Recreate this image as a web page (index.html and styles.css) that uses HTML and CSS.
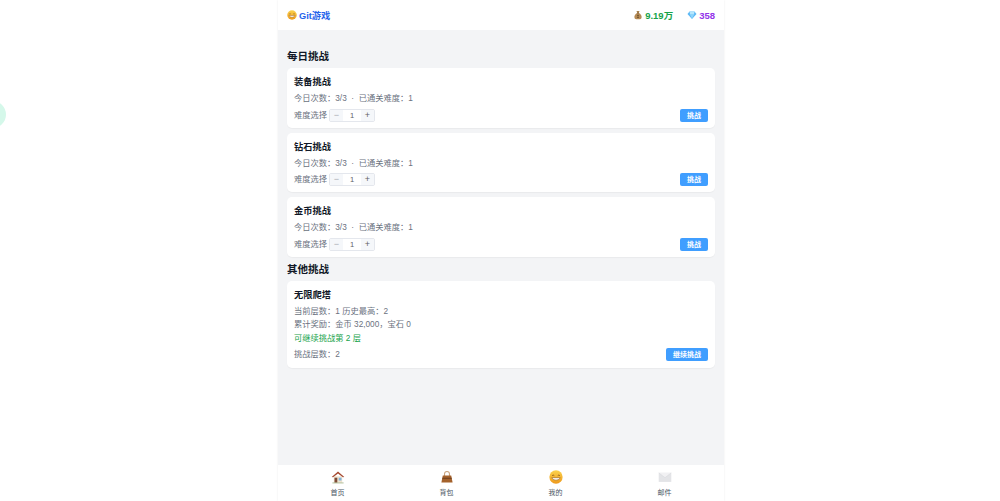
FILE: index.html
```html
<!DOCTYPE html>
<html lang="zh-CN">
<head>
    <meta charset="UTF-8">
    <meta name="viewport" content="width=device-width, initial-scale=1.0">
    <title>Git游戏</title>
    <link rel="stylesheet" href="styles.css">
</head>
<body>
    <div class="float-dot"></div>

    <div class="app">
        <header class="topbar">
            <div class="logo">
                <svg class="icon" viewBox="0 0 20 20"><use href="#smile"/></svg>
                <span>Git游戏</span>
            </div>
            <div class="assets">
                <div class="asset gold">
                    <svg class="icon" viewBox="0 0 20 20"><use href="#moneybag"/></svg>
                    <span>9.19万</span>
                </div>
                <div class="asset gem">
                    <svg class="icon" viewBox="0 0 20 20">
                        <path d="M5 3h10l4 5-9 10L1 8z" fill="#5cb8f5"/>
                        <path d="M5.500 8h9L10 18z" fill="#8ed4fb"/>
                        <path d="M5 3h10l-1 5H6z" fill="#b5e6fd"/>
                    </svg>
                    <span>358</span>
                </div>
            </div>
        </header>

        <main>
            <h2 class="section-title">每日挑战</h2>

            <div class="card">
                <h3>装备挑战</h3>
                <p class="info">今日次数：3/3 &nbsp;·&nbsp; 已通关难度：1</p>
                <div class="action-row">
                    <div class="level">
                        <span class="info">难度选择</span>
                        <div class="stepper"><span class="minus">−</span><span class="num">1</span><span class="plus">+</span></div>
                    </div>
                    <a href="#" class="btn">挑战</a>
                </div>
            </div>

            <div class="card">
                <h3>钻石挑战</h3>
                <p class="info">今日次数：3/3 &nbsp;·&nbsp; 已通关难度：1</p>
                <div class="action-row">
                    <div class="level">
                        <span class="info">难度选择</span>
                        <div class="stepper"><span class="minus">−</span><span class="num">1</span><span class="plus">+</span></div>
                    </div>
                    <a href="#" class="btn">挑战</a>
                </div>
            </div>

            <div class="card">
                <h3>金币挑战</h3>
                <p class="info">今日次数：3/3 &nbsp;·&nbsp; 已通关难度：1</p>
                <div class="action-row">
                    <div class="level">
                        <span class="info">难度选择</span>
                        <div class="stepper"><span class="minus">−</span><span class="num">1</span><span class="plus">+</span></div>
                    </div>
                    <a href="#" class="btn">挑战</a>
                </div>
            </div>

            <h2 class="section-title">其他挑战</h2>

            <div class="card tower">
                <h3>无限爬塔</h3>
                <p class="info">当前层数：1 历史最高：2</p>
                <p class="info">累计奖励：金币 32,000，宝石 0</p>
                <p class="info ok">可继续挑战第 2 层</p>
                <div class="action-row">
                    <span class="info">挑战层数：2</span>
                    <a href="#" class="btn">继续挑战</a>
                </div>
            </div>
        </main>

        <nav class="tabbar">
            <a href="#" class="tab">
                <svg class="tab-icon" viewBox="0 0 20 20">
                    <path d="M4 9h12v9H4z" fill="#f0e3cf"/>
                    <path d="M1 10l9-8 9 8-2 .5L10 5 3 10.500z" fill="#a5482f"/>
                    <path d="M5 11h4v7H5z" fill="#7d4a36"/>
                    <path d="M11 11h4v4h-4z" fill="#7fb4dc"/>
                    <path d="M2 18h16v1H2z" fill="#8fa36f"/>
                </svg>
                <span>首页</span>
            </a>
            <a href="#" class="tab">
                <svg class="tab-icon" viewBox="0 0 20 20">
                    <path d="M6.500 9V5.500a3.500 3.500 0 0 1 7 0V9" fill="none" stroke="#c9a27c" stroke-width="1.500"/>
                    <path d="M4 8h12l2 10H2z" fill="#a4622c"/>
                    <path d="M3.400 11h13.200l.3 1.500H3.100z" fill="#6d3d1a"/>
                </svg>
                <span>背包</span>
            </a>
            <a href="#" class="tab">
                <svg class="tab-icon" viewBox="0 0 20 20"><use href="#smile"/></svg>
                <span>我的</span>
            </a>
            <a href="#" class="tab">
                <svg class="tab-icon" viewBox="0 0 20 20">
                    <path d="M1 4h18v13H1z" fill="#e3e4e7"/>
                    <path d="M1 4l9 7 9-7" fill="#f1f1f3" stroke="#cfd1d6" stroke-width=".6"/>
                </svg>
                <span>邮件</span>
            </a>
        </nav>
    </div>

    <svg class="defs" width="0" height="0">
        <defs>
            <linearGradient id="face" x1="0" y1="0" x2="0" y2="1">
                <stop offset="0" stop-color="#fbd24e"/>
                <stop offset="1" stop-color="#ee9a1c"/>
            </linearGradient>
            <g id="smile">
                <circle cx="10" cy="10" r="9.500" fill="url(#face)"/>
                <path d="M4.500 8q1.500-1.500 3 0M12.500 8q1.500-1.500 3 0" fill="none" stroke="#7a4a12" stroke-width="1.100"/>
                <path d="M4 11h12q-1 3.500-6 3.500T4 11z" fill="#fff" stroke="#8a5414" stroke-width=".8"/>
            </g>
            <g id="moneybag">
                <path d="M7 2h6l-1.500 4h-3z" fill="#a9824f"/>
                <path d="M8 6h4c4 2 6 6 5 10-.5 2-2 2.500-7 2.500S3.500 18 3 16C2 12 4 8 8 6z" fill="#b58a55"/>
                <path d="M8 5.500h4v1.200H8z" fill="#6f5230"/>
                <path d="M8 10h4v1H8zM8 14h4v1H8zM9.500 9h1v7h-1z" fill="#5a4022"/>
            </g>
        </defs>
    </svg>
</body>
</html>
```

FILE: styles.css
```css
* {
    box-sizing: border-box;
}
html, body {
    height: 100%;
}
body {
    margin: 0;
    padding: 0 0 0 2px;
    background-color: #fff;
    color: #111827;
    font-family: "Liberation Sans", "Noto Sans CJK SC", sans-serif;
    overflow: hidden;
}
.defs {
    position: absolute;
}
.float-dot {
    position: absolute;
    left: -21px;
    top: 101px;
    width: 27px;
    height: 27px;
    border-radius: 50%;
    background-color: #d5f8ea;
}
.app {
    width: 446px;
    height: 100%;
    margin: 0 auto;
    display: flex;
    flex-direction: column;
    background-color: #f3f4f6;
    box-shadow: 0 0 2px rgba(0, 0, 0, 0.08);
}
.topbar {
    height: 30px;
    padding: 0 9px;
    flex-shrink: 0;
    display: flex;
    justify-content: space-between;
    align-items: center;
    background-color: #fff;
}
.icon {
    width: 10px;
    height: 10px;
}
.logo {
    display: flex;
    align-items: center;
    gap: 2px;
    color: #2563eb;
    font-size: 9.250px;
    font-weight: bold;
}
.assets {
    display: flex;
    gap: 14px;
}
.asset {
    display: flex;
    align-items: center;
    gap: 2px;
    font-size: 9.500px;
    font-weight: bold;
}
.gold {
    color: #16a34a;
}
.gem {
    color: #9333ea;
}
main {
    flex: 1;
    padding: 19px 9px 0;
}
.section-title {
    margin: 0 0 5px;
    font-size: 10.500px;
    line-height: 14px;
    font-weight: bold;
}
.card {
    display: flex;
    flex-direction: column;
    height: 59.500px;
    margin-bottom: 5px;
    padding: 7px 7px 0;
    background-color: #fff;
    border-radius: 5px;
    box-shadow: 0 1px 1px rgba(0, 0, 0, 0.04);
}
.card.tower {
    height: 87px;
}
.card h3 {
    margin: 0 0 3px;
    font-size: 9.250px;
    line-height: 14px;
    font-weight: bold;
}
.info {
    margin: 0;
    color: #6b7280;
    font-size: 8.250px;
    line-height: 13.500px;
}
.info.ok {
    color: #16a34a;
}
.action-row {
    display: flex;
    justify-content: space-between;
    align-items: center;
    margin-top: 3px;
}
.level {
    display: flex;
    align-items: center;
    gap: 2px;
}
.stepper {
    display: flex;
    height: 13px;
    border: 1px solid #e4e7ed;
    border-radius: 2px;
    font-size: 7.500px;
    line-height: 11px;
    text-align: center;
}
.stepper span {
    display: block;
}
.minus, .plus {
    width: 13px;
    background-color: #f5f7fa;
    color: #a8abb2;
    font-size: 9px;
}
.plus {
    color: #606266;
}
.num {
    width: 18px;
    background-color: #fff;
    color: #606266;
}
.btn {
    display: inline-block;
    padding: 0 7px;
    height: 13px;
    line-height: 13px;
    background-color: #409eff;
    color: #fff;
    font-size: 7px;
    font-weight: bold;
    text-decoration: none;
    border-radius: 2px;
}
.tabbar {
    height: 36px;
    flex-shrink: 0;
    padding: 0 5px;
    display: flex;
    background-color: #fff;
}
.tab {
    flex: 1;
    display: flex;
    flex-direction: column;
    align-items: center;
    gap: 3.500px;
    padding-top: 5px;
    color: #4b5563;
    font-size: 7px;
    line-height: 9px;
    text-decoration: none;
}
.tab-icon {
    width: 14px;
    height: 14px;
}
```
